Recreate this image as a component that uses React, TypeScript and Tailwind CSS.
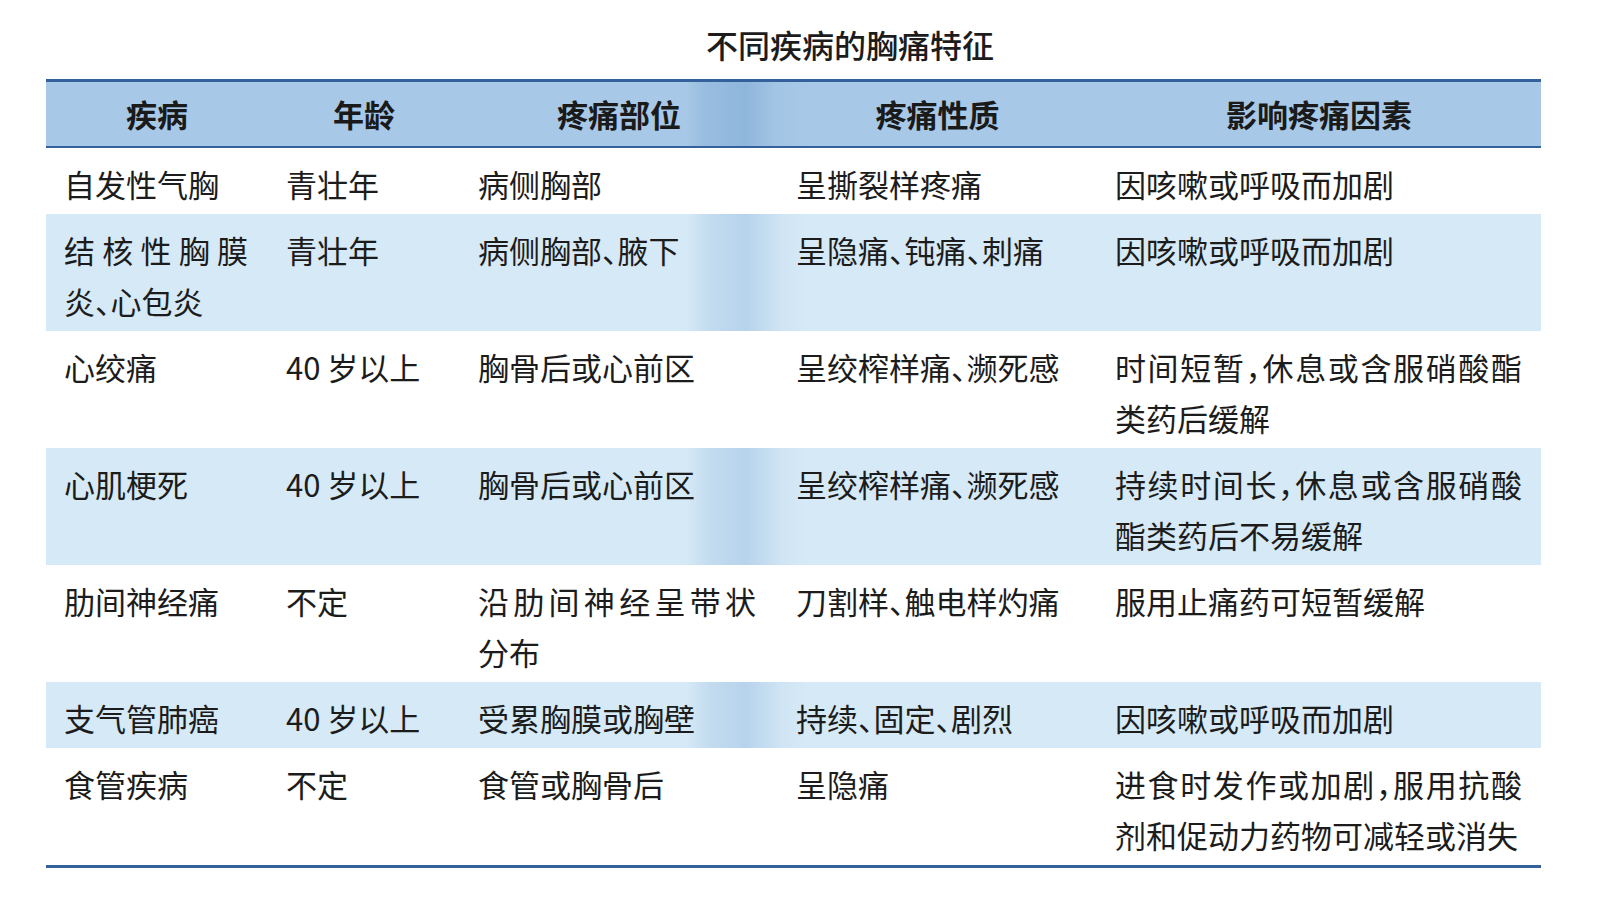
import React from 'react';

type Row = { cells: string[]; shaded?: boolean };

const headers = ['疾病', '年龄', '疼痛部位', '疼痛性质', '影响疼痛因素'];

const rows: Row[] = [
  { cells: ['自发性气胸', '青壮年', '病侧胸部', '呈撕裂样疼痛', '因咳嗽或呼吸而加剧'] },
  { cells: ['结核性胸膜炎、心包炎', '青壮年', '病侧胸部、腋下', '呈隐痛、钝痛、刺痛', '因咳嗽或呼吸而加剧'], shaded: true },
  { cells: ['心绞痛', '40 岁以上', '胸骨后或心前区', '呈绞榨样痛、濒死感', '时间短暂，休息或含服硝酸酯类药后缓解'] },
  { cells: ['心肌梗死', '40 岁以上', '胸骨后或心前区', '呈绞榨样痛、濒死感', '持续时间长，休息或含服硝酸酯类药后不易缓解'], shaded: true },
  { cells: ['肋间神经痛', '不定', '沿肋间神经呈带状分布', '刀割样、触电样灼痛', '服用止痛药可短暂缓解'] },
  { cells: ['支气管肺癌', '40 岁以上', '受累胸膜或胸壁', '持续、固定、剧烈', '因咳嗽或呼吸而加剧'], shaded: true },
  { cells: ['食管疾病', '不定', '食管或胸骨后', '呈隐痛', '进食时发作或加剧，服用抗酸剂和促动力药物可减轻或消失'] },
];

// column paddings so text lines up with the printed table
const cellPad = ['pl-[18px] pr-[20px]', 'pl-[18px] pr-[18px]', 'pl-[18px] pr-[22px]', 'pl-[18px] pr-[18px]', 'pl-[18px] pr-[19px]'];

export default function App() {
  return (
    <div className="w-[1600px] h-[900px] bg-white text-[#1c1c1c] font-['Noto_Sans_CJK_SC','Noto_Sans',sans-serif] [font-feature-settings:'halt']">
      <div className="pt-[24px] pb-[15px] pl-[100px] text-center text-[32px] leading-[40px] font-medium">不同疾病的胸痛特征</div>

      <div className="ml-[46px] w-[1495px]">
        <div className="grid grid-cols-[222px_192px_318px_319px_444px] h-[69px] items-center bg-[#a7c8e6] border-t-[3px] border-b-[2px] border-[#34619c] bg-[linear-gradient(90deg,transparent_640px,#98bde0_660px,#8fb6dc_700px,#a3c5e5_730px,transparent_760px)]">
          {headers.map(h => (
            <div key={h} className="text-center text-[31px] font-bold leading-[40px] text-[#1a1a1a]">{h}</div>
          ))}
        </div>

        {rows.map((r, i) => (
          <div
            key={i}
            className={
              'grid grid-cols-[222px_192px_318px_319px_444px] pt-[10px] pb-[5px] ' +
              (r.shaded ? 'bg-[#d6e9f6] bg-[linear-gradient(90deg,#d6e9f6_640px,#c2dbef_665px,#b7d3ec_700px,#cfe4f4_735px,#d6e9f6_760px)] ' : 'bg-white ') +
              (i === rows.length - 1 ? 'border-b-[3px] border-[#34619c]' : '')
            }
          >
            {r.cells.map((c, j) => (
              <div key={j} className={cellPad[j] + ' text-[31px] leading-[51px] text-justify'}>{c}</div>
            ))}
          </div>
        ))}
      </div>
    </div>
  );
}
